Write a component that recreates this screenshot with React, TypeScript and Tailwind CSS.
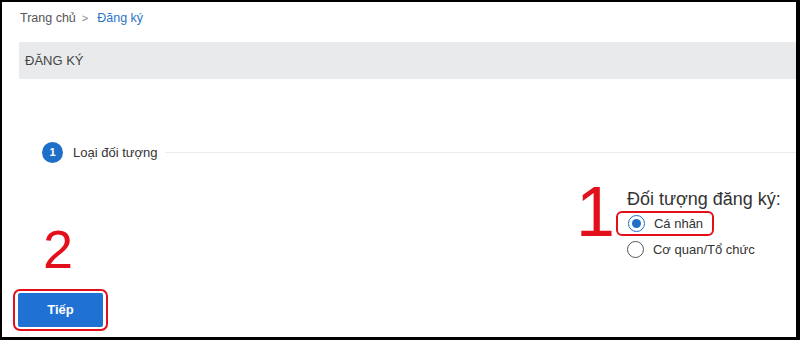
import React from 'react'

const font = { fontFamily: '"Liberation Sans", Arial, sans-serif' }

function Radio({ checked, label }: { checked?: boolean; label: string }) {
  return (
    <label className="flex items-center gap-[9px] text-[13px] leading-[17px] text-[#333]">
      <span
        className={
          'flex h-[17px] w-[17px] items-center justify-center rounded-full border-[1.5px] ' +
          (checked ? 'border-[#1f6fc9]' : 'border-[#555]')
        }
      >
        {checked && <span className="h-[9px] w-[9px] rounded-full bg-[#1f6fc9]" />}
      </span>
      {label}
    </label>
  )
}

export default function App() {
  return (
    <div
      className="box-border h-[340px] w-[800px] overflow-hidden border-t-2 border-r-4 border-b-[3px] border-l-2 border-black bg-white"
      style={font}
    >
      {/* breadcrumb */}
      <div className="flex h-[40px] items-start gap-[6px] pl-[18px] pt-[9px] text-[12.5px] leading-[15px] text-[#555]">
        <span>Trang chủ</span>
        <span className="text-[11px] text-[#888]">&gt;</span>
        <span className="ml-[3px] text-[#2a74c6]">Đăng ký</span>
      </div>

      <div className="ml-[17px] flex h-[37px] items-center bg-[#e9eaec] pl-[6px] text-[13px] text-[#444]">
        ĐĂNG KÝ
      </div>

      {/* step */}
      <div className="ml-[40px] mt-[63px] flex h-[21px] items-center">
        <span className="flex h-[21px] w-[21px] items-center justify-center rounded-full bg-[#1f6fc9] text-[11px] font-bold text-white">
          1
        </span>
        <span className="ml-[10px] text-[13px] text-[#333]">Loại đối tượng</span>
        <span className="ml-[8px] h-[1px] flex-1 bg-[#ececec]" />
      </div>

      <div className="flex">
        <div className="flex flex-col pl-[11px]">
          <span className="ml-[30px] mt-[59px] text-[54px] leading-none text-[#e3101c]">2</span>
          <div className="mt-[13px] rounded-[7px] border-2 border-[#e3101c] px-[3px] py-[2px]">
            <button className="block h-[34px] w-[85px] rounded-[2px] bg-[#1f72d3] text-[13px] font-bold text-white">
              Tiếp
            </button>
          </div>
        </div>

        <div className="ml-[468px] mt-[14px] flex">
          <span className="mr-[12px] text-[70px] leading-none text-[#e3101c]">1</span>
          <div className="flex flex-col">
            <span className="mt-[12px] text-[18px] leading-[20px] text-[#333]">Đối tượng đăng ký:</span>
            <div className="-ml-[11px] mt-[2px] w-[98px] rounded-[6px] border-2 border-[#e3101c] py-[2px] pl-[10px]">
              <Radio checked label="Cá nhân" />
            </div>
            <div className="mt-[5px]">
              <Radio label="Cơ quan/Tổ chức" />
            </div>
          </div>
        </div>
      </div>
    </div>
  )
}
